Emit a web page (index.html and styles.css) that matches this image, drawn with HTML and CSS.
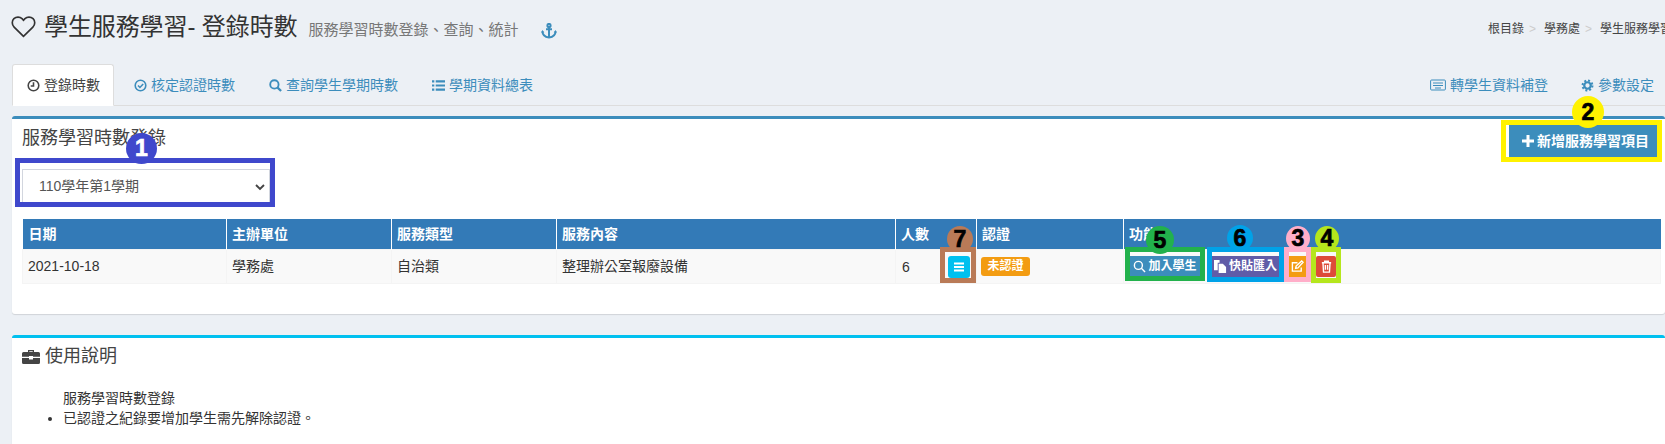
FILE: index.html
```html
<!DOCTYPE html>
<html lang="zh-Hant">
<head>
<meta charset="utf-8">
<title>學生服務學習- 登錄時數</title>
<link rel="stylesheet" href="styles.css">
</head>
<body>
<div class="page">
  <header class="head">
    <svg class="ic-heart" viewBox="0 0 24 22"><path d="M12 20.5 3 11.6C.6 9.200.7 5.600 2.800 3.500 5 1.400 8.500 1.400 10.600 3.500L12 5l1.400-1.500c2.100-2.100 5.600-2.100 7.800 0 2.100 2.100 2.200 5.700-.2 8.100z"/></svg>
    <h1 class="title">學生服務學習- 登錄時數</h1>
    <span class="sub">服務學習時數登錄、查詢、統計</span>
    <svg class="ic-anchor" viewBox="0 0 16 16"><circle cx="8" cy="2.500" r="1.600"/><path d="M8 4v10.500M5 6.300h6M1.500 8.500c0 3.500 3 5.500 6.500 6 3.500-.5 6.500-2.500 6.500-6"/><path class="fill" d="M0 9.500 1.500 7 3.300 9.500zM12.700 9.500 14.500 7 16 9.500z"/></svg>
    <nav class="crumb"><span>根目錄</span><i>&gt;</i><span>學務處</span><i>&gt;</i><span>學生服務學習</span></nav>
  </header>

  <nav class="tabs">
    <a class="tab active"><svg class="ic" viewBox="0 0 14 14"><circle cx="7" cy="7" r="5.700"/><path d="M7 3.500V7.500H4"/></svg>登錄時數</a>
    <a class="tab"><svg class="ic" viewBox="0 0 14 14"><circle cx="7" cy="7" r="5.700"/><path d="M4.300 7 6.400 9.100 9.900 5.300"/></svg>核定認證時數</a>
    <a class="tab"><svg class="ic" viewBox="0 0 14 14"><circle cx="5.800" cy="5.800" r="4.500" class="mid"/><path d="M9 9 13 13" class="thick"/></svg>查詢學生學期時數</a>
    <a class="tab"><svg class="ic" viewBox="0 0 14 14"><path class="thick" d="M0 2.500H2.500M4 2.500H14M0 7H2.500M4 7H14M0 11.500H2.500M4 11.500H14"/></svg>學期資料總表</a>
    <a class="tab right"><svg class="ic wide" viewBox="0 0 16 12"><rect x=".6" y="1" width="14.800" height="10" rx="1"/><path d="M3 4H13M3 6.500H13M5 9H11"/></svg>轉學生資料補登</a>
    <a class="tab"><svg class="ic" viewBox="0 0 14 14"><circle cx="7" cy="7" r="3.500" class="thick"/><circle cx="7" cy="7" r="5.300" class="gear"/></svg>參數設定</a>
  </nav>

  <section class="box box-primary">
    <div class="box-head">
      <h3 class="box-title">服務學習時數登錄</h3>
      <button class="btn-add"><svg class="ic-plus" viewBox="0 0 12 12"><path d="M6 0V12M0 6H12"/></svg>新增服務學習項目</button>
    </div>
    <select class="term"><option>110學年第1學期</option></select>
    <table class="grid">
      <colgroup><col class="c1"><col class="c2"><col class="c3"><col class="c4"><col class="c5"><col class="c6"><col></colgroup>
      <thead>
        <tr><th>日期</th><th>主辦單位</th><th>服務類型</th><th>服務內容</th><th>人數</th><th>認證</th><th>功能</th></tr>
      </thead>
      <tbody>
        <tr>
          <td>2021-10-18</td>
          <td>學務處</td>
          <td>自治類</td>
          <td>整理辦公室報廢設備</td>
          <td><div class="count"><span>6</span><button class="btn-list"><svg viewBox="0 0 12 10"><path d="M1 1.500H11M1 5H11M1 8.500H11"/></svg></button></div></td>
          <td class="cert"><span class="label">未認證</span></td>
          <td><div class="acts">
            <button class="act blue"><svg class="ic-s" viewBox="0 0 14 14"><circle cx="5.800" cy="5.800" r="4.300"/><path d="M9 9 13 13"/></svg>加入學生</button>
            <button class="act purple"><svg class="ic-s" viewBox="0 0 14 14"><path class="solid" d="M0 0H6V3H4V11H0z"/><path class="solid" d="M5 4H9.500L13 7.500V14H5z"/></svg>快貼匯入</button>
            <button class="act orange"><svg class="ic-s" viewBox="0 0 14 14"><path d="M11 8V12H1.500V3H7"/><path d="M5 9 5.500 6.500 11.500 1 13 2.500 7.500 8.500z"/></svg></button>
            <button class="act red"><svg class="ic-s" viewBox="0 0 14 14"><path d="M2 3H12M5 3V1.300H9V3M3.200 3 3.800 13H10.200L10.800 3M5.800 5.500V10.500M8.200 5.500V10.500"/></svg></button>
          </div></td>
        </tr>
      </tbody>
    </table>
  </section>

  <section class="box box-info">
    <h3 class="box-title info-title"><svg class="ic-case" viewBox="0 0 18 15"><path d="M6 3V1H12V3H10.700V2.200H7.300V3z"/><path d="M1.500 3H16.500Q18 3 18 4.500V7.800H11V7H7V7.800H0V4.500Q0 3 1.500 3z"/><path d="M0 9H7V10.500H11V9H18V13.500Q18 15 16.500 15H1.500Q0 15 0 13.500z"/></svg>使用說明</h3>
    <div class="help">
      <p class="help-lead">服務學習時數登錄</p>
      <ul class="help-list"><li>已認證之紀錄要增加學生需先解除認證。</li></ul>
    </div>
  </section>

  <div class="mark m1"></div>
  <div class="mark m2"></div>
  <div class="mark m5"></div>
  <div class="mark m6"></div>
  <div class="mark m3"></div>
  <div class="mark m4"></div>
  <div class="mark m7"></div>
  <span class="dot d1">1</span>
  <span class="dot d2">2</span>
  <span class="dot d3">3</span>
  <span class="dot d4">4</span>
  <span class="dot d5">5</span>
  <span class="dot d6">6</span>
  <span class="dot d7">7</span>
</div>
</body>
</html>
```
FILE: styles.css
```css
* { box-sizing: border-box; }
html, body { margin: 0; padding: 0; }
body {
  background: #ecf0f5;
  color: #333;
  font-family: "Liberation Sans", "Noto Sans CJK TC", sans-serif;
  font-size: 14px;
  line-height: 20px;
}
.page { position: relative; width: 1665px; height: 444px; overflow: hidden; padding-left: 12px; }

/* header */
.head { display: flex; align-items: baseline; height: 64px; padding-top: 12px; white-space: nowrap; }
.ic-heart { width: 25px; height: 23px; fill: none; stroke: #333; stroke-width: 1.600; align-self: flex-start; margin: 3px 8px 0 -1px; }
.title { margin: 0; font-size: 24px; font-weight: 400; line-height: 30px; letter-spacing: -.1px; color: #333; }
.sub { margin-left: 11px; font-size: 15px; color: #777; }
.ic-anchor { width: 16px; height: 16px; margin-left: 23px; align-self: flex-start; margin-top: 11px; fill: none; stroke: #3c8dbc; stroke-width: 2; flex: none; }
.ic-anchor .fill { fill: #3c8dbc; stroke: none; }
.crumb { display: flex; margin-left: auto; width: 177px; flex: none; font-size: 12px; color: #444; align-self: flex-start; margin-top: 7px; }
.crumb i { font-style: normal; color: #ccc; margin: 0 8px 0 5px; }

/* tabs */
.tabs { display: flex; gap: 4px; height: 42px; border-bottom: 1px solid #ddd; white-space: nowrap; }
.tab { display: flex; align-items: center; height: 42px; padding: 0 15px; color: #3c8dbc; border-radius: 3px 3px 0 0; }
.tab.active { background: #fff; color: #444; border: 1px solid #ddd; border-bottom-color: #fff; padding: 0 13px 0 14px; margin-right: 1px; }
.tab.right { margin-left: auto; margin-right: -1px; }
.tab:last-child { margin-right: -4px; }
.ic { width: 13px; height: 13px; margin-right: 4px; flex: none; fill: none; stroke: currentColor; stroke-width: 1.700; }
.ic.wide { width: 16px; height: 12px; stroke-width: 1; }
.ic .mid { stroke-width: 2; }
.ic .thick { stroke-width: 2.400; }
.ic .gear { stroke-width: 2.200; stroke-dasharray: 2.100 2.060; }

/* boxes */
.box { background: #fff; border-top: 3px solid #3c8dbc; border-radius: 3px; box-shadow: 0 1px 1px rgba(0,0,0,.12); padding: 0 4px 30px 10px; margin-top: 10px; }
.box-info { border-top-color: #00c0ef; margin-top: 21px; padding-bottom: 40px; }
.box-head { display: flex; justify-content: space-between; align-items: flex-start; height: 38px; }
.box-title { margin: 0; font-size: 18px; font-weight: 400; line-height: 38px; color: #444; }
.btn-add { display: flex; align-items: center; height: 32px; width: 148px; margin: 6px 4px 0 0; padding: 0 0 0 13px; border: 0; background: #3c8dbc; color: #fff; font: 700 14px/20px "Liberation Sans", "Noto Sans CJK TC", sans-serif; white-space: nowrap; }
.ic-plus { width: 12px; height: 12px; margin-right: 3px; fill: none; stroke: #fff; stroke-width: 3; flex: none; }
.term { display: block; width: 248px; height: 34px; margin: 12px 0 16px; padding: 0 16px; appearance: none; -webkit-appearance: none; background: #fff url("data:image/svg+xml,%3Csvg xmlns='http://www.w3.org/2000/svg' width='10' height='7' viewBox='0 0 10 7'%3E%3Cpath d='M1 1l4 4 4-4' fill='none' stroke='%23444' stroke-width='1.900'/%3E%3C/svg%3E") no-repeat 232px 14px; border: 1px solid #d2d6de; border-radius: 0; color: #555; font: 14px "Liberation Sans", "Noto Sans CJK TC", sans-serif; }

/* table */
.grid { width: 1639px; table-layout: fixed; border-collapse: collapse; }
.c1 { width: 204px; } .c2 { width: 165px; } .c3 { width: 165px; } .c4 { width: 339px; } .c5 { width: 81px; } .c6 { width: 147px; }
.grid th { height: 30px; padding: 0 5px; background: #337ab7; color: #fff; font-weight: 700; text-align: left; border-left: 1px solid #fff; }
.grid th:first-child { border-left: 0; padding-left: 6px; }
.grid td { height: 34px; padding: 0 5px; background: #f9f9f9; border: 1px solid #f4f4f4; }
.grid td:first-child { padding-left: 5px; }
.count { display: flex; justify-content: space-between; align-items: center; padding-left: 1px; padding-right: 1px; margin-top: 1px; }
.btn-list { display: flex; align-items: center; justify-content: center; width: 22px; height: 22px; padding: 0; border: 0; border-radius: 3px; background: #00c0ef; }
.btn-list svg { width: 12px; height: 10px; fill: none; stroke: #fff; stroke-width: 1.800; }
.grid td.cert { padding-left: 4px; }
.label { display: inline-block; width: 49px; height: 19px; background: #f39c12; color: #fff; border-radius: 3px; font-size: 12px; font-weight: 700; line-height: 19px; text-align: center; vertical-align: middle; }
.acts { display: flex; gap: 10px; margin-top: 1px; padding-left: 1px; }
.act { display: flex; align-items: center; justify-content: center; height: 21px; padding: 0; border: 0; color: #fff; font: 700 12px/21px "Liberation Sans", "Noto Sans CJK TC", sans-serif; white-space: nowrap; }
.act.blue { width: 70px; margin-right: 2px; background: #3c8dbc; }
.act.purple { width: 67px; background: #605ca8; }
.act.orange { width: 17px; background: #f39c12; }
.act.red { width: 20px; background: #dd4b39; border-radius: 2px; }
.ic-s { width: 13px; height: 13px; margin-right: 2px; flex: none; fill: none; stroke: #fff; stroke-width: 1.500; }
.act.orange .ic-s, .act.red .ic-s { margin: 0; }
.ic-s .solid { fill: #fff; stroke: none; }

/* help */
.info-title { display: flex; align-items: center; line-height: 38px; height: 37px; }
.ic-case { width: 18px; height: 15px; margin-right: 5px; fill: #444; flex: none; }
.help { padding-top: 13px; color: #333; }
.help-lead { margin: 0 0 0 41px; }
.help-list { margin: 0; padding-left: 41px; }

/* annotation overlays */
.mark { position: absolute; border: 5px solid; }
.m1 { left: 15px; top: 158px; width: 260px; height: 49px; border-color: #3f48cc; }
.m2 { left: 1501px; top: 120px; width: 161px; height: 42px; border-color: #fff200; }
.m3 { left: 1284px; top: 247px; width: 27px; height: 35px; border-color: #ffaec9; }
.m4 { left: 1311px; top: 247px; width: 30px; height: 36px; border-color: #b5e61d; }
.m5 { left: 1125px; top: 247px; width: 80px; height: 34px; border-color: #22b14c; }
.m6 { left: 1207px; top: 247px; width: 77px; height: 35px; border-color: #00a2e8; }
.m7 { left: 940px; top: 247px; width: 36px; height: 36px; border-color: #b97a57; }
.dot { position: absolute; display: flex; align-items: center; justify-content: center; border-radius: 50%; color: #000; font-size: 23px; font-weight: 700; line-height: 1; -webkit-text-stroke: .7px currentColor; }
.d1 { left: 126px; top: 133px; width: 31px; height: 31px; background: #3f48cc; color: #fff; }
.d2 { left: 1572px; top: 96px; width: 32px; height: 32px; background: #fff200; }
.d3 { left: 1286px; top: 226px; width: 24px; height: 25px; background: #ffaec9; }
.d4 { left: 1315px; top: 226px; width: 24px; height: 25px; background: #b5e61d; }
.d5 { left: 1146px; top: 226px; width: 28px; height: 28px; background: #22b14c; }
.d6 { left: 1227px; top: 225px; width: 26px; height: 26px; background: #00a2e8; }
.d7 { left: 947px; top: 226px; width: 26px; height: 26px; background: #b97a57; }
```
